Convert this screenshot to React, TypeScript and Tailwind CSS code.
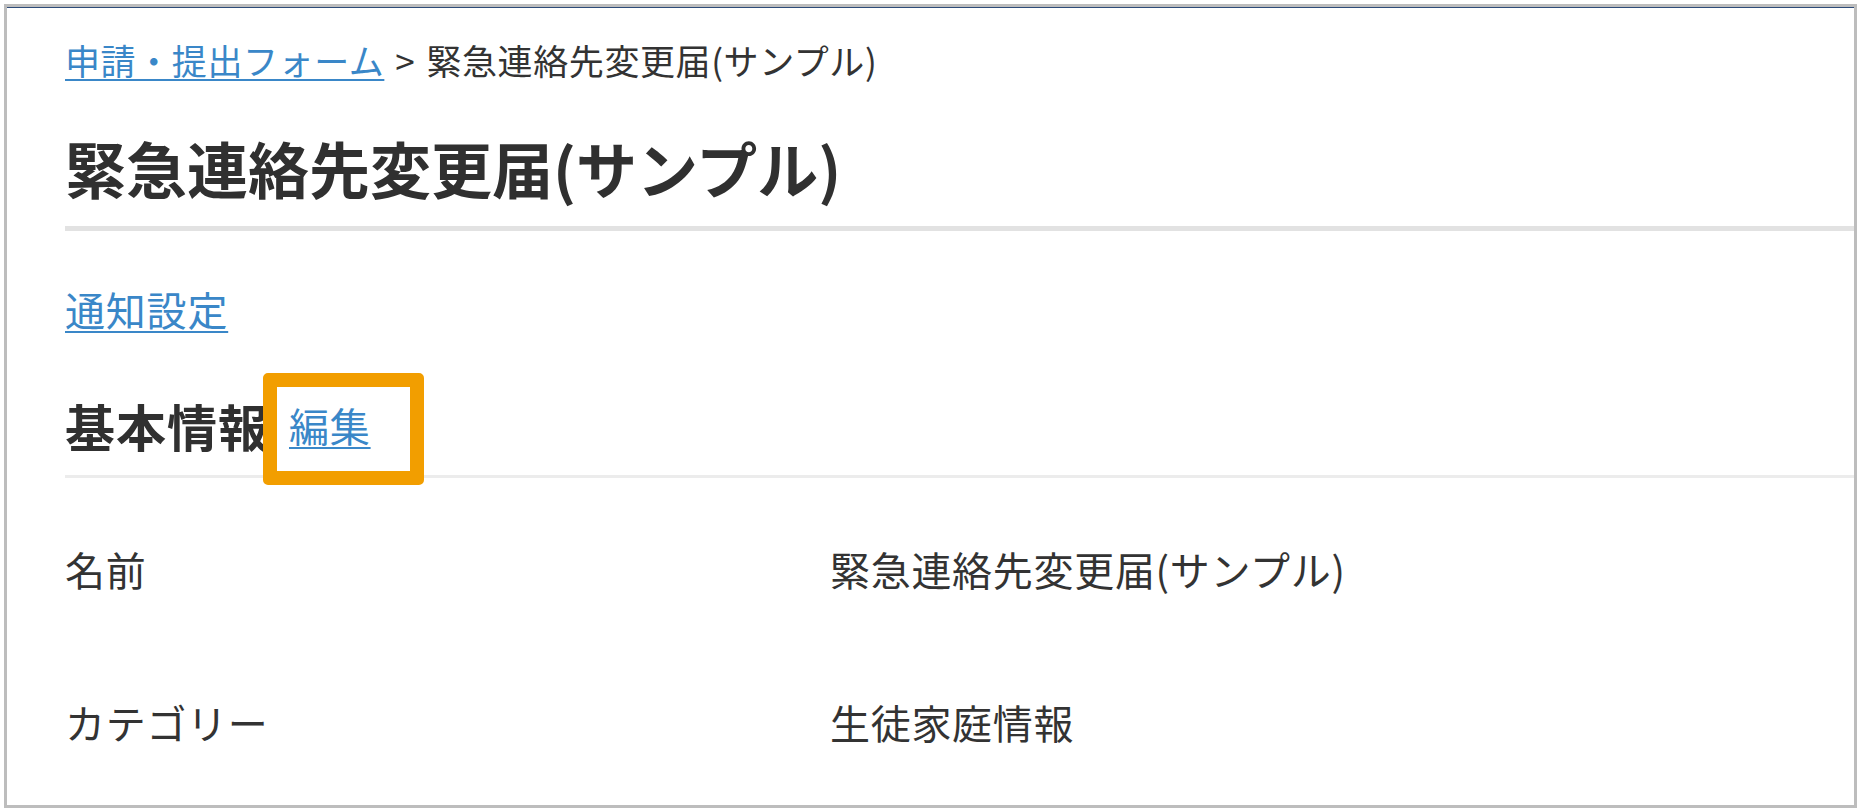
const fields = [
  { label: "名前", value: "緊急連絡先変更届(サンプル)" },
  { label: "カテゴリー", value: "生徒家庭情報" },
];

const font = { fontFamily: '"Noto Sans CJK JP", "Noto Sans", sans-serif' };

export default function App() {
  return (
    <div className="w-[1860px] h-[811px] bg-white pt-[4px] pl-[4px]" style={font}>
      <div className="w-[1853px] h-[804px] border-[3px] border-[#bdbdbd]">
        <div className="h-full border-t border-[#2d4b79] pl-[58px] text-[#333333]">
          {/* breadcrumb */}
          <div className="pt-[32px] text-[35px] leading-[40px] tracking-[0.6px] whitespace-nowrap">
            <a
              href="#"
              className="text-[#3a87c8] underline decoration-2 underline-offset-[4px]"
            >
              申請・提出フォーム
            </a>
            <span className="mx-[11px]">&gt;</span>
            <span>緊急連絡先変更届(サンプル)</span>
          </div>

          {/* title */}
          <h1 className="mt-[52px] pb-[22px] border-b-[5px] border-[#e2e2e2] text-[61px] leading-[72px] font-bold text-[#303030] whitespace-nowrap">
            緊急連絡先変更届(サンプル)
          </h1>

          {/* notification link */}
          <div className="mt-[54px] text-[40px] leading-[48px] tracking-[0.8px]">
            <a
              href="#"
              className="text-[#3a87c8] underline decoration-2 underline-offset-[5px]"
            >
              通知設定
            </a>
          </div>

          {/* section header */}
          <div className="mt-[64px] pb-[22px] border-b-[3px] border-[#ececec]">
            <div className="h-[56px] flex items-center">
              <h2 className="text-[50px] leading-[56px] font-bold tracking-[1px] text-[#303030]">基本情報</h2>
              <span className="relative ml-[20px] text-[40px] leading-[48px] tracking-[0.8px]">
                <a
                  href="#"
                  className="text-[#3a87c8] underline decoration-2 underline-offset-[5px]"
                >
                  編集
                </a>
                <span className="absolute left-[-26px] top-[-28px] w-[161px] h-[112px] border-[14px] border-[#f29e00] rounded-[5px]" />
              </span>
            </div>
          </div>

          {/* fields */}
          <div className="pt-[67px] flex flex-col gap-[105px]">
            {fields.map((f) => (
              <div key={f.label} className="grid grid-cols-[765px_1fr] text-[40px] leading-[48px] tracking-[0.7px]">
                <div>{f.label}</div>
                <div className="whitespace-nowrap">{f.value}</div>
              </div>
            ))}
          </div>
        </div>
      </div>
    </div>
  );
}
